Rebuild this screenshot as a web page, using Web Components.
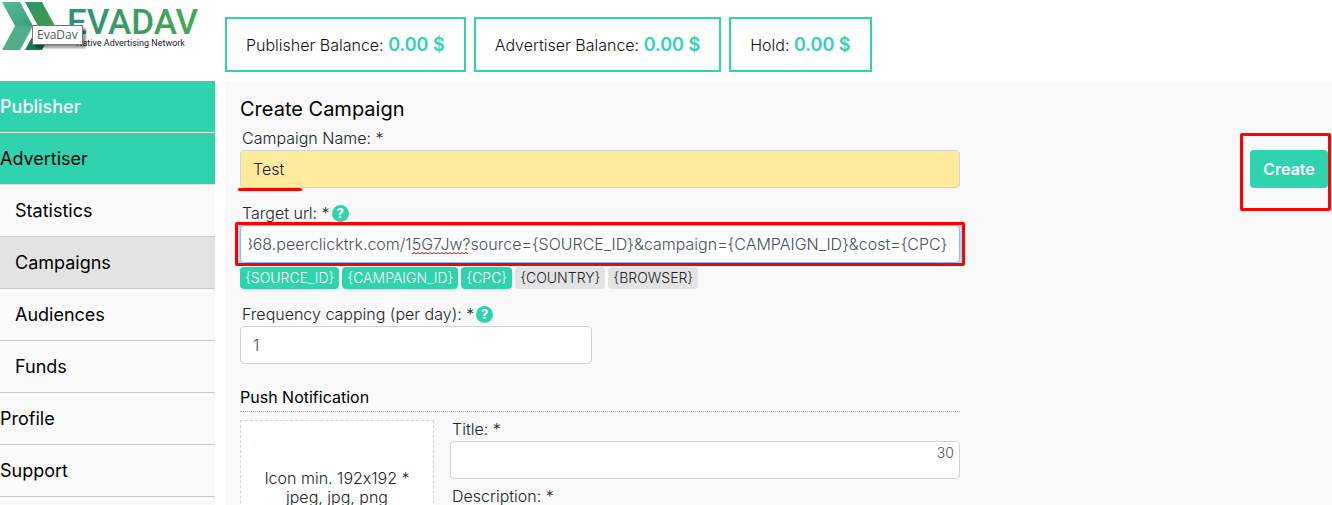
<!DOCTYPE html>
<html lang="en">
<head>
<meta charset="utf-8">
<title>EvaDav</title>
<style>
  body {
    margin: 0;
    background: #fff;
    color: #212529;
    font: 300 16px/24px Inter, "Liberation Sans", sans-serif;
    font-variant-ligatures: no-contextual;
    --green: #2fd3ae;
    --mark: #fe0000;
    --panel: #f9f9f9;
  }
</style>
</head>
<body>
<eva-app></eva-app>

<script>
class EvaLogo extends HTMLElement {
  constructor() {
    super();
    this.attachShadow({ mode: 'open' }).innerHTML = `
      <style>
        :host { display: block; position: relative; width: 215px; }
        a, svg { display: block; }
        .tip {
          position: absolute;
          left: 32px;
          top: 25px;
          padding: 0 4px;
          border: 1px solid #767676;
          background: #fff;
          color: #575757;
          font: 400 12px/18px "Open Sans", "Noto Sans", sans-serif;
          box-shadow: 3px 3px 2px rgba(0, 0, 0, 0.4);
        }
      </style>
      <a href="#" aria-label="EvaDav home">
        <svg width="215" height="56" viewBox="0 0 215 56">
          <defs>
            <linearGradient id="word" gradientUnits="userSpaceOnUse" x1="68" y1="0" x2="198" y2="0">
              <stop offset="0" stop-color="#2f8f7c"/>
              <stop offset="1" stop-color="#45ab50"/>
            </linearGradient>
            <linearGradient id="first" x1="0" y1="0" x2="1" y2="1">
              <stop offset="0" stop-color="#55bd94"/>
              <stop offset="1" stop-color="#3a9c7c"/>
            </linearGradient>
            <linearGradient id="second" x1="0" y1="0" x2="1" y2="1">
              <stop offset="0" stop-color="#2f9268"/>
              <stop offset="1" stop-color="#3f9d4b"/>
            </linearGradient>
          </defs>
          <path d="M2 2H20L33 26H15Z" fill="url(#first)"/>
          <path d="M15 26H33L20 50H2Z" fill="#51ae8a"/>
          <path d="M25 2H42L55 26H38Z" fill="url(#second)"/>
          <path d="M38 26H55L42 50H25Z" fill="#0c8048"/>
          <text x="67" y="34" font-family="Roboto, sans-serif" font-weight="500" font-size="35" fill="url(#word)">EVADAV</text>
          <text x="76" y="46" font-family="Roboto, sans-serif" font-weight="400" font-size="9" fill="#222">Native Advertising Network</text>
        </svg>
      </a>
      <span class="tip" role="tooltip">EvaDav</span>
    `;
  }
}

class BalanceBox extends HTMLElement {
  constructor() {
    super();
    this.attachShadow({ mode: 'open' }).innerHTML = `
      <style>
        :host {
          display: block;
          box-sizing: border-box;
          height: 55px;
          padding: 0 19px;
          border: 2px solid var(--green);
          color: #111;
          line-height: 51px;
          white-space: nowrap;
        }
        b { color: var(--green); font-size: 18px; font-weight: 600; }
      </style>
      <slot></slot>: <b>${this.getAttribute('amount')} $</b>
    `;
  }
}

class NavItem extends HTMLElement {
  constructor() {
    super();
    this.attachShadow({ mode: 'open' }).innerHTML = `
      <style>
        :host { display: block; border-bottom: 1px solid #ccc; background: var(--panel); }
        a {
          display: block;
          color: #000;
          font-size: 18px;
          font-weight: 400;
          line-height: 51px;
          text-decoration: none;
        }
        :host([sub]) a { padding-left: 15px; }
        :host([section]) { background: var(--green); border-color: #e2e2e2; }
        :host([current]) { background: #e3e3e3; }
        :host([light]) a { color: #fff; font-weight: 500; }
      </style>
      <a href="#"><slot></slot></a>
    `;
  }
}

class HelpDot extends HTMLElement {
  constructor() {
    super();
    this.attachShadow({ mode: 'open' }).innerHTML = `
      <style>
        :host { display: block; }
        button {
          display: block;
          width: 17px;
          height: 17px;
          padding: 0;
          border: 0;
          border-radius: 50%;
          background: var(--green);
          color: #fff;
          font: 700 13px/17px Inter, sans-serif;
        }
      </style>
      <button type="button">?</button>
    `;
  }
}

class FormField extends HTMLElement {
  constructor() {
    super();
    const help = this.hasAttribute('help') ? '<help-dot></help-dot>' : '';
    const count = this.hasAttribute('count') ? `<span class="count">${this.getAttribute('count')}</span>` : '';
    this.attachShadow({ mode: 'open' }).innerHTML = `
      <style>
        :host { display: block; }
        .label { display: flex; align-items: center; gap: 2px; padding-left: 2px; }
        .box { position: relative; }
        input {
          display: block;
          box-sizing: border-box;
          width: 100%;
          height: 38px;
          padding: 0 12px;
          border: 1px solid #ced4da;
          border-radius: 4px;
          outline: 0;
          background: #fff;
          color: #495057;
          font: inherit;
        }
        :host([filled]) input { background: #ffeb9b; color: #212529; }
        :host([active]) input {
          padding-left: 8px;
          border-color: #80bdff;
          box-shadow: 0 0 0 3px #b3d7ff;
          text-align: right;
        }
        .count { position: absolute; top: 0; right: 6px; color: #495057; font-size: 14px; }
        :host([active]) .box::after {
          content: "";
          position: absolute;
          inset: -3px -5px;
          border: 3px solid var(--mark);
          border-radius: 2px;
        }
        :host([filled]) .box::after {
          content: "";
          position: absolute;
          left: -2px;
          bottom: -3px;
          width: 64px;
          height: 3px;
          border-radius: 2px;
          background: var(--mark);
        }
        .typo { position: absolute; left: 172px; top: 27px; }
      </style>
      <div class="label"><label for="field">${this.getAttribute('label')}: *</label>${help}</div>
      <div class="box">
        <input id="field" type="text" spellcheck="false" value="${this.getAttribute('value') || ''}">
        ${count}
        ${this.hasAttribute('active') ? `
          <svg class="typo" width="58" height="3" viewBox="0 0 58 3">
            <path d="M0 2${'l2-1.5l2 1.5'.repeat(14)}" fill="none" stroke="#f00"/>
          </svg>` : ''}
      </div>
    `;
  }

  connectedCallback() {
    // long values are shown from their end
    const input = this.shadowRoot.querySelector('input');
    input.scrollLeft = input.scrollWidth;
  }
}

class MacroTag extends HTMLElement {
  constructor() {
    super();
    this.attachShadow({ mode: 'open' }).innerHTML = `
      <style>
        :host { display: block; }
        button {
          display: block;
          height: 22px;
          padding: 0 5px;
          border: 0;
          border-radius: 4px;
          background: #e3e3e3;
          color: #212529;
          font: 300 14px/22px Inter, "Liberation Sans", sans-serif;
        }
        :host([used]) button { background: var(--green); color: #fff; }
      </style>
      <button type="button"><slot></slot></button>
    `;
  }
}

class CreateButton extends HTMLElement {
  constructor() {
    super();
    this.attachShadow({ mode: 'open' }).innerHTML = `
      <style>
        :host { display: block; position: relative; }
        button {
          display: block;
          width: 78px;
          height: 38px;
          padding: 0;
          border: 0;
          border-radius: 4px;
          background: var(--green);
          color: #fff;
          font: 600 16px/38px Inter, "Liberation Sans", sans-serif;
        }
        :host::after {
          content: "";
          position: absolute;
          inset: -17px -3px -23px -10px;
          border: 3px solid var(--mark);
          border-radius: 2px;
        }
      </style>
      <button type="submit"><slot></slot></button>
    `;
  }
}

class IconDrop extends HTMLElement {
  constructor() {
    super();
    this.attachShadow({ mode: 'open' }).innerHTML = `
      <style>
        :host {
          display: block;
          box-sizing: border-box;
          height: 194px;
          padding-top: 48px;
          border: 1px dashed #ced4da;
          background: #fff;
          line-height: 19px;
          text-align: center;
        }
      </style>
      <slot></slot>
    `;
  }
}

class CampaignForm extends HTMLElement {
  constructor() {
    super();
    this.attachShadow({ mode: 'open' }).innerHTML = `
      <style>
        :host { display: block; padding: 12px 4px 0 15px; background: var(--panel); }
        h1 { margin: 0 0 2px; color: #000; font-size: 20px; font-weight: 400; line-height: 30px; }
        h2 {
          margin: 8px 0 0;
          padding-bottom: 2px;
          border-bottom: 1px dotted #aaa;
          color: #000;
          font-size: 16px;
          font-weight: 400;
          line-height: 24px;
        }
        form { display: grid; grid-template-columns: minmax(0, 720px) auto; justify-content: space-between; }
        .fields { display: flex; flex-direction: column; gap: 13px; }
        .tags { display: flex; gap: 3px; margin-top: 4px; }
        .half { display: grid; grid-template-columns: 1fr 1fr; gap: 16px; }
        .push { display: grid; grid-template-columns: 194px 1fr; gap: 16px; margin-top: 5px; }
        .texts { display: flex; flex-direction: column; gap: 5px; }
        icon-drop { margin-top: 3px; }
        create-button { margin-top: 24px; }
      </style>
      <h1>Create Campaign</h1>
      <form>
        <div class="fields">
          <form-field label="Campaign Name" value="Test" filled></form-field>
          <div>
            <form-field label="Target url" help active
              value="368.peerclicktrk.com/15G7Jw?source={SOURCE_ID}&amp;amp;campaign={CAMPAIGN_ID}&amp;amp;cost={CPC}"></form-field>
            <div class="tags">
              <macro-tag used>{SOURCE_ID}</macro-tag>
              <macro-tag used>{CAMPAIGN_ID}</macro-tag>
              <macro-tag used>{CPC}</macro-tag>
              <macro-tag>{COUNTRY}</macro-tag>
              <macro-tag>{BROWSER}</macro-tag>
            </div>
          </div>
          <div class="half">
            <form-field label="Frequency capping (per day)" value="1" help></form-field>
          </div>
          <section>
            <h2>Push Notification</h2>
            <div class="push">
              <icon-drop>Icon min. 192x192 *<br>jpeg, jpg, png</icon-drop>
              <div class="texts">
                <form-field label="Title" count="30"></form-field>
                <form-field label="Description"></form-field>
              </div>
            </div>
          </section>
        </div>
        <div><create-button>Create</create-button></div>
      </form>
    `;
  }
}

class EvaApp extends HTMLElement {
  constructor() {
    super();
    this.attachShadow({ mode: 'open' }).innerHTML = `
      <style>
        :host {
          display: grid;
          grid-template-columns: 215px minmax(0, 1fr);
          grid-template-rows: 81px 1fr;
          column-gap: 10px;
          height: 100vh;
          overflow: hidden;
        }
        header { display: flex; gap: 8px; padding-top: 17px; }
        nav { background: var(--panel); }
        campaign-form { margin-top: 1px; }
      </style>
      <eva-logo></eva-logo>
      <header>
        <balance-box amount="0.00">Publisher Balance</balance-box>
        <balance-box amount="0.00">Advertiser Balance</balance-box>
        <balance-box amount="0.00">Hold</balance-box>
      </header>
      <nav>
        <nav-item section light>Publisher</nav-item>
        <nav-item section>Advertiser</nav-item>
        <nav-item sub>Statistics</nav-item>
        <nav-item sub current>Campaigns</nav-item>
        <nav-item sub>Audiences</nav-item>
        <nav-item sub>Funds</nav-item>
        <nav-item>Profile</nav-item>
        <nav-item>Support</nav-item>
      </nav>
      <campaign-form></campaign-form>
    `;
  }
}

customElements.define('eva-logo', EvaLogo);
customElements.define('balance-box', BalanceBox);
customElements.define('nav-item', NavItem);
customElements.define('help-dot', HelpDot);
customElements.define('form-field', FormField);
customElements.define('macro-tag', MacroTag);
customElements.define('create-button', CreateButton);
customElements.define('icon-drop', IconDrop);
customElements.define('campaign-form', CampaignForm);
customElements.define('eva-app', EvaApp);
</script>
</body>
</html>
